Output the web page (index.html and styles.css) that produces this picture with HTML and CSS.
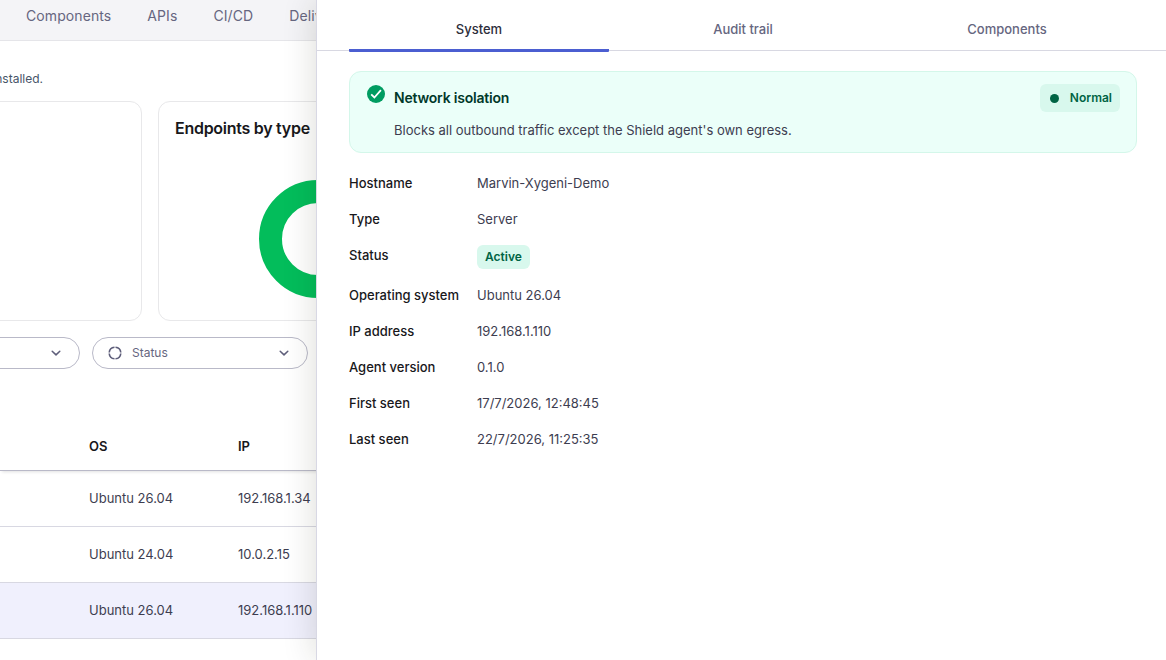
FILE: index.html
```html
<!DOCTYPE html>
<html lang="en">
<head>
<meta charset="utf-8">
<title>Endpoints</title>
<link rel="stylesheet" href="styles.css">
</head>
<body>
<div class="page">
  <nav class="nav"><span>Components</span><span>APIs</span><span>CI/CD</span><span>Delivery</span></nav>
  <p class="intro">installed.</p>
  <section class="cards">
    <article class="card card-first"></article>
    <article class="card card-type">
      <h2>Endpoints by type</h2>
      <svg class="donut" width="118" height="118" viewBox="0 0 118 118"><circle cx="59" cy="59" r="47.5" fill="none" stroke="#03bd5b" stroke-width="23"/></svg>
    </article>
  </section>
  <div class="filters">
    <div class="filter filter-first">
      <svg class="chevron" width="12" height="12" viewBox="0 0 12 12"><path d="M2.2 4.2 6 7.9l3.8-3.7"/></svg>
    </div>
    <div class="filter">
      <svg class="ring" width="14" height="14" viewBox="0 0 14 14"><circle cx="7" cy="7" r="5.8" pathLength="100"/></svg>
      <span>Status</span>
      <svg class="chevron" width="12" height="12" viewBox="0 0 12 12"><path d="M2.2 4.2 6 7.9l3.8-3.7"/></svg>
    </div>
  </div>
  <div class="table">
    <div class="row head"><span>OS</span><span>IP</span></div>
    <div class="row"><span>Ubuntu 26.04</span><span>192.168.1.34</span></div>
    <div class="row"><span>Ubuntu 24.04</span><span>10.0.2.15</span></div>
    <div class="row selected"><span>Ubuntu 26.04</span><span>192.168.1.110</span></div>
  </div>
</div>
<aside class="drawer">
  <div class="tabs"><span class="tab active">System</span><span class="tab">Audit trail</span><span class="tab">Components</span></div>
  <div class="content">
    <section class="notice">
      <svg class="check" width="18" height="18" viewBox="0 0 18 18"><circle cx="9" cy="9" r="9" fill="#009c61"/><path d="m4.2 9.3 3.2 3.2 6.5-7.3" fill="none" stroke="#fff" stroke-width="1.8"/></svg>
      <div class="notice-text"><h3>Network isolation</h3><p>Blocks all outbound traffic except the Shield agent's own egress.</p></div>
      <span class="badge normal"><i class="dot"></i>Normal</span>
    </section>
    <dl class="details">
      <dt>Hostname</dt><dd>Marvin-Xygeni-Demo</dd>
      <dt>Type</dt><dd>Server</dd>
      <dt>Status</dt><dd><span class="badge">Active</span></dd>
      <dt>Operating system</dt><dd>Ubuntu 26.04</dd>
      <dt>IP address</dt><dd>192.168.1.110</dd>
      <dt>Agent version</dt><dd>0.1.0</dd>
      <dt>First seen</dt><dd>17/7/2026, 12:48:45</dd>
      <dt>Last seen</dt><dd>22/7/2026, 11:25:35</dd>
    </dl>
  </div>
</aside>
</body>
</html>
```
FILE: styles.css
```css
* { box-sizing: border-box; }
body { margin: 0; height: 660px; overflow: hidden; background: #fff; color: #3d3d50; font: 13px/20px Inter, sans-serif; }
h2, h3, p, dl, dd { margin: 0; }
.page { width: 100%; height: 660px; overflow: hidden; }
.nav { display: flex; gap: 36px; height: 41px; padding: 6px 0 0 26px; background: #f4f4f7; border-bottom: 1px solid #e5e5e9; color: #666680; font-size: 14px; letter-spacing: 0.09px; }
.intro { display: flex; justify-content: flex-end; width: 43px; height: 60px; padding-top: 28px; color: #475569; font-size: 12px; }
.cards { display: flex; gap: 16px; height: 220px; margin-left: -100px; }
.card { border: 1px solid #e8e8ea; border-radius: 12px; }
.card-first { width: 242px; }
.card-type { display: flex; flex-direction: column; width: 320px; padding: 14px 16px; }
.card-type h2 { color: #18181b; font-size: 16px; line-height: 24px; font-weight: 600; letter-spacing: -0.27px; }
.donut { margin: 40px 0 0 84px; }
.filters { display: flex; gap: 12px; margin: 16px 0 0 -136px; }
.filter { display: flex; align-items: center; width: 216px; height: 32px; padding: 0 17px 0 15px; border: 1px solid #b9b9c8; border-radius: 16px; color: #666680; font-size: 12px; }
.filter span { margin-left: 10px; }
.chevron { margin-left: auto; fill: none; stroke: #5e5e7a; stroke-width: 1.5; stroke-linecap: round; stroke-linejoin: round; }
.ring { fill: none; stroke: #5e5e7a; stroke-width: 1.6; stroke-dasharray: 22 3; stroke-dashoffset: -1.5; }
.table { margin-top: 53px; }
.row { display: grid; grid-template-columns: 149px 1fr; align-items: center; height: 56px; padding: 0 0 1px 89px; border-bottom: 1px solid #d8d8e2; }
.head { height: 49px; padding-bottom: 0; border-bottom-color: #b9b9c8; box-shadow: 0 3px 3px -2px rgb(0 0 0 / 12%); color: #18181b; font-weight: 600; }
.selected { background: #f0f0fd; }
.drawer { position: absolute; z-index: 2; top: 0; right: 0; bottom: 0; left: 316px; background: #fff; border-left: 1px solid #d8d8e4; box-shadow: 0 0 32px rgb(35 35 10 / 16%); }
.tabs { display: grid; grid-template-columns: repeat(3, 1fr); gap: 4px; height: 51px; padding: 0 29px 0 32px; border-bottom: 1px solid #d8d8e2; }
.tab { height: 52px; padding-top: 19px; color: #666680; font-weight: 500; text-align: center; }
.active { color: #2d2d3a; border-bottom: 3px solid #4b5ed1; border-radius: 1px; }
.content { padding: 20px 29px 0 32px; }
.notice { display: flex; height: 82px; padding: 12px 16px 0 17px; background: #ebfff9; border: 1px solid #d4f7ea; border-radius: 12px; }
.check { margin-top: 1px; }
.notice-text { flex: 1; padding: 4px 0 0 9px; }
.notice h3 { color: #00382a; font-size: 14px; line-height: 20px; font-weight: 600; letter-spacing: -0.21px; }
.notice p { margin-top: 12px; }
.badge { display: inline-flex; align-items: center; height: 24px; padding: 0 8px; border-radius: 6px; background: #d8f8ed; color: #006444; font-size: 12px; line-height: 20px; font-weight: 600; }
.normal { height: 28px; }
.dot { width: 9px; height: 9px; margin: 0 10.5px 0 2px; border-radius: 50%; background: #006444; }
.details { display: grid; grid-template-columns: 112px 1fr; column-gap: 16px; row-gap: 16px; margin-top: 20px; }
.details dt { color: #18181b; font-weight: 500; }
.details .badge { vertical-align: top; }
.details dd { line-height: 20px; }
```
